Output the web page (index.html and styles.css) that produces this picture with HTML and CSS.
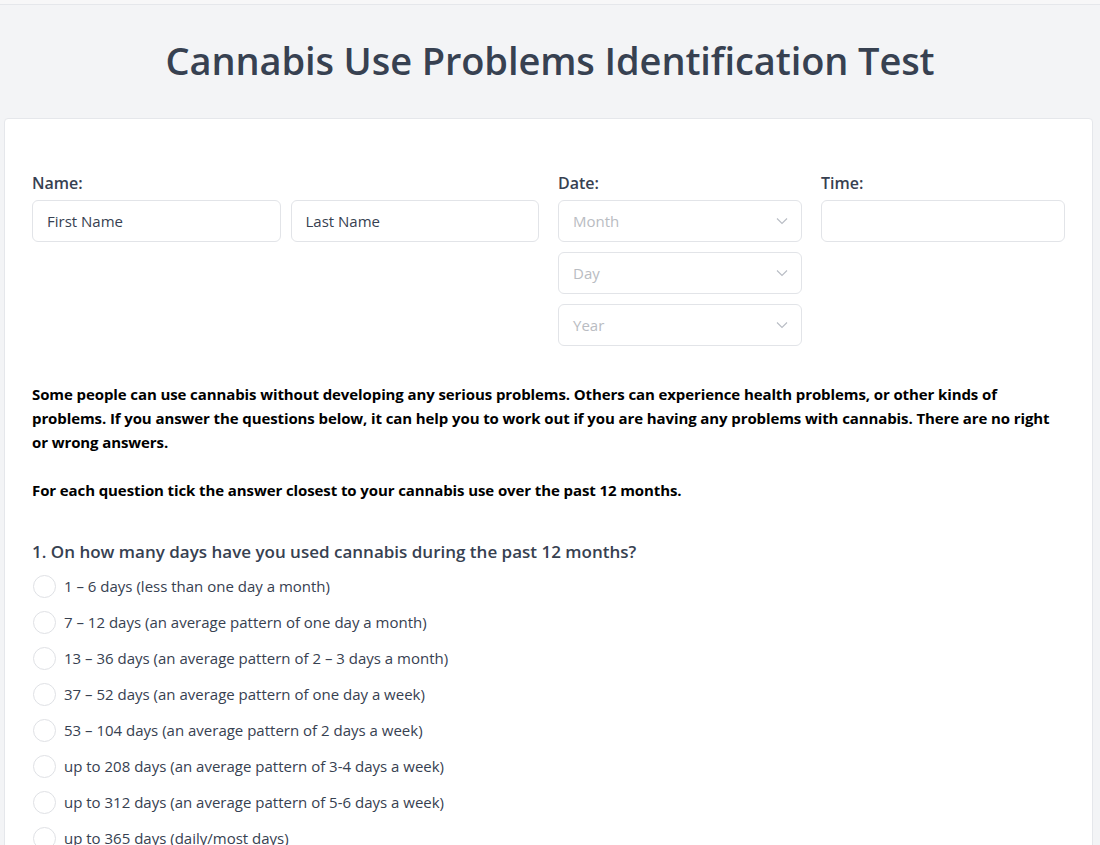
FILE: index.html
```html
<!DOCTYPE html>
<html lang="en">
<head>
<meta charset="utf-8">
<title>Cannabis Use Problems Identification Test</title>
<link rel="stylesheet" href="styles.css">
</head>
<body>
<div class="topline"></div>
<header class="header">
  <h1 class="title">Cannabis Use Problems Identification Test</h1>
</header>
<main class="card">
  <div class="top-grid">
    <div class="field-group">
      <label class="label">Name:</label>
      <div class="pair pair-name">
        <div class="input">First Name</div>
        <div class="input">Last Name</div>
      </div>
    </div>
    <div class="pair pair-dt">
      <div class="field-group">
        <label class="label">Date:</label>
        <div class="stack">
          <div class="select"><span>Month</span><svg class="chev" width="12" height="8" viewBox="0 0 12 8"><path d="M1 1.5 L6 6.5 L11 1.5" fill="none" stroke="#b8bcc4" stroke-width="1.1"/></svg></div>
          <div class="select"><span>Day</span><svg class="chev" width="12" height="8" viewBox="0 0 12 8"><path d="M1 1.5 L6 6.5 L11 1.5" fill="none" stroke="#b8bcc4" stroke-width="1.1"/></svg></div>
          <div class="select"><span>Year</span><svg class="chev" width="12" height="8" viewBox="0 0 12 8"><path d="M1 1.5 L6 6.5 L11 1.5" fill="none" stroke="#b8bcc4" stroke-width="1.1"/></svg></div>
        </div>
      </div>
      <div class="field-group">
        <label class="label">Time:</label>
        <div class="input"></div>
      </div>
    </div>
  </div>

  <p class="intro">Some people can use cannabis without developing any serious problems. Others can experience health problems, or other kinds of problems. If you answer the questions below, it can help you to work out if you are having any problems with cannabis. There are no right or wrong answers.<br><br>For each question tick the answer closest to your cannabis use over the past 12 months.</p>

  <section class="question">
    <h2 class="q-title">1. On how many days have you used cannabis during the past 12 months?</h2>
    <ul class="options">
      <li class="option"><span class="radio"></span>1 – 6 days (less than one day a month)</li>
      <li class="option"><span class="radio"></span>7 – 12 days (an average pattern of one day a month)</li>
      <li class="option"><span class="radio"></span>13 – 36 days (an average pattern of 2 – 3 days a month)</li>
      <li class="option"><span class="radio"></span>37 – 52 days (an average pattern of one day a week)</li>
      <li class="option"><span class="radio"></span>53 – 104 days (an average pattern of 2 days a week)</li>
      <li class="option"><span class="radio"></span>up to 208 days (an average pattern of 3-4 days a week)</li>
      <li class="option"><span class="radio"></span>up to 312 days (an average pattern of 5-6 days a week)</li>
      <li class="option"><span class="radio"></span>up to 365 days (daily/most days)</li>
    </ul>
  </section>
</main>
</body>
</html>
```
FILE: styles.css
```css
* { box-sizing: border-box; }
html, body { margin: 0; padding: 0; }
body {
  background: #f3f4f6;
  font-family: "Open Sans", "Noto Sans", sans-serif;
  color: #374151;
  overflow: hidden;
  height: 845px;
}
.topline {
  height: 5px;
  background: #f7f7f8;
  border-bottom: 1px solid #e5e7eb;
}
.header {
  height: 113px;
  display: flex;
  justify-content: center;
  padding-top: 32px;
}
.title {
  margin: 0;
  font-size: 38px;
  font-weight: 600;
  line-height: 46px;
  color: #374151;
  letter-spacing: -0.1px;
}
.card {
  margin: 0 7px 0 4px;
  background: #fff;
  border: 1px solid #e5e7eb;
  border-radius: 4px;
  padding: 52px 27px 40px 27px;
  min-height: 800px;
}
.top-grid {
  display: grid;
  grid-template-columns: 1fr 1fr;
  column-gap: 19px;
}
.pair { display: grid; grid-template-columns: 1fr 1fr; }
.pair-name { column-gap: 10px; }
.pair-dt { column-gap: 19px; }
.field-group { display: flex; flex-direction: column; }
.label {
  font-size: 16px;
  font-weight: 600;
  line-height: 24px;
  color: #374151;
  margin-bottom: 5px;
}
.input, .select {
  height: 42px;
  border: 1px solid #e2e4e8;
  border-radius: 6px;
  display: flex;
  align-items: center;
  padding: 0 14px;
  font-size: 15px;
  color: #374151;
  background: #fff;
}
.stack { display: flex; flex-direction: column; gap: 10px; }
.select { justify-content: space-between; color: #b9bcc2; padding-right: 13px; }
.chev { display: block; }
.intro {
  margin: 36px 0 0 0;
  font-size: 15px;
  font-weight: 700;
  line-height: 24px;
  color: #000;
  letter-spacing: -0.1px;
}
.question { margin-top: 37px; }
.q-title {
  margin: 0 0 3px 0;
  font-size: 17px;
  font-weight: 600;
  line-height: 26px;
  color: #374151;
}
.options { list-style: none; margin: 0; padding: 0; }
.option {
  display: flex;
  align-items: center;
  height: 36px;
  font-size: 15px;
  color: #374151;
}
.radio {
  width: 23px;
  height: 23px;
  border: 1px solid #dfe1e5;
  border-radius: 50%;
  margin: 0 8px 0 1px;
  flex: none;
}
```
